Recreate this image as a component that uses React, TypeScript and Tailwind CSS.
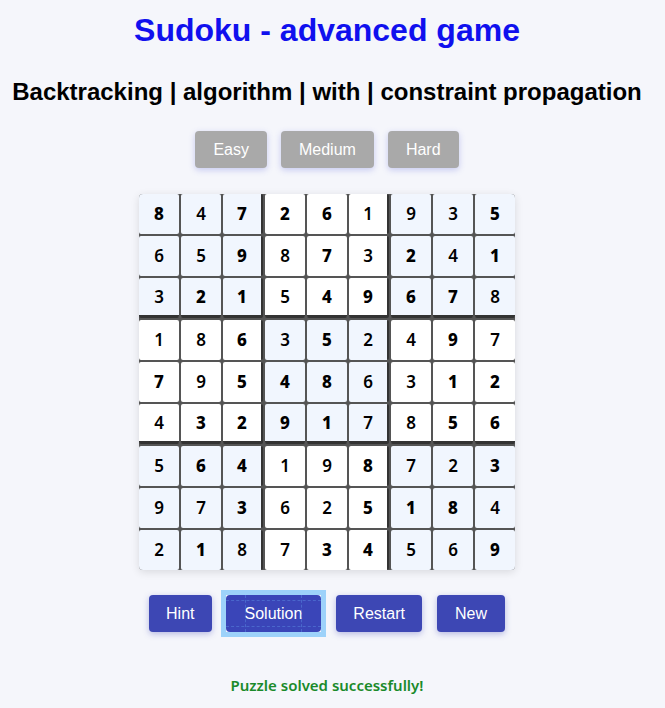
import { useState } from "react"

const solved = [
    [8, 4, 7, 2, 6, 1, 9, 3, 5],
    [6, 5, 9, 8, 7, 3, 2, 4, 1],
    [3, 2, 1, 5, 4, 9, 6, 7, 8],
    [1, 8, 6, 3, 5, 2, 4, 9, 7],
    [7, 9, 5, 4, 8, 6, 3, 1, 2],
    [4, 3, 2, 9, 1, 7, 8, 5, 6],
    [5, 6, 4, 1, 9, 8, 7, 2, 3],
    [9, 7, 3, 6, 2, 5, 1, 8, 4],
    [2, 1, 8, 7, 3, 4, 5, 6, 9],
]

// 1 = given clue (drawn heavier)
const givens = [
    [1, 0, 1, 1, 1, 0, 0, 0, 1],
    [0, 0, 1, 0, 1, 0, 1, 0, 1],
    [0, 1, 1, 0, 1, 1, 1, 1, 0],
    [0, 0, 1, 0, 1, 0, 0, 1, 0],
    [1, 0, 1, 1, 1, 0, 0, 1, 1],
    [0, 1, 1, 1, 1, 0, 0, 1, 1],
    [0, 1, 1, 0, 0, 1, 0, 0, 1],
    [0, 0, 1, 0, 0, 1, 1, 1, 0],
    [0, 1, 0, 0, 1, 1, 0, 0, 1],
]

function App() {
    const [level, setLevel] = useState("easy")
    const [message] = useState("Puzzle solved successfully!")

    const shaded = (r: number, c: number) => (Math.floor(r / 3) + Math.floor(c / 3)) % 2 === 0

    return (
        <div className="min-h-[708px] bg-[#f5f6fb] pr-[11px] flex flex-col items-center font-['Liberation_Sans',Arial,sans-serif]">
            <h1 className="mt-[12px] text-[32px] leading-[37px] font-bold text-[#1010ee]">Sudoku - advanced game</h1>
            <h2 className="mt-[29px] text-[24px] leading-[28px] font-bold text-black whitespace-nowrap">
                Backtracking | algorithm | with | constraint propagation
            </h2>

            <div className="mt-[25px] flex gap-[14px]">
                {["Easy", "Medium", "Hard"].map(l => (
                    <button
                        key={l}
                        onClick={() => setLevel(l.toLowerCase())}
                        className={`h-[37px] px-[18px] rounded-[4px] text-[16px] text-white bg-[#a9a9a9] shadow-[0_2px_6px_rgba(90,100,220,0.3)] ${level === l.toLowerCase() ? "" : ""}`}
                    >
                        {l}
                    </button>
                ))}
            </div>

            <div className="mt-[26px] grid grid-cols-[repeat(9,40px)] gap-[2px] bg-[#555] rounded-[4px] overflow-hidden shadow-[0_2px_8px_rgba(0,0,0,0.12)]">
                {solved.map((row, r) =>
                    row.map((v, c) => (
                        <div
                            key={`${r}-${c}`}
                            className={`box-border w-[40px] h-[40px] rounded-[2px] flex items-center justify-center text-[17px] text-black font-['Noto_Sans',sans-serif]
                                ${shaded(r, c) ? "bg-[#f1f6fe]" : "bg-white"}
                                ${c === 2 || c === 5 ? "border-r-[2px] border-r-[#333]" : ""}
                                ${r === 2 || r === 5 ? "border-b-[3px] border-b-[#333]" : ""}
                                ${givens[r][c] ? "font-extrabold" : "font-semibold"}`}
                        >
                            {v}
                        </div>
                    ))
                )}
            </div>

            <div className="mt-[25px] flex">
                <button className="h-[37px] px-[17px] rounded-[4px] text-[16px] text-white bg-[#3d47b4] shadow-[0_2px_6px_rgba(63,72,180,0.35)]">Hint</button>
                <div className="relative ml-[14px] outline outline-[5px] outline-[#9dd2fa]">
                    <button className="h-[37px] px-[19px] rounded-[4px] text-[16px] text-white bg-[#3a45b8]">Solution</button>
                    <div className="absolute inset-x-[19px] inset-y-0 border-x border-dashed border-[#5a8ae0]/50 pointer-events-none" />
                    <div className="absolute inset-x-0 inset-y-[5px] border-y border-dashed border-[#5a8ae0]/50 pointer-events-none" />
                </div>
                <button className="ml-[15px] h-[37px] px-[17px] rounded-[4px] text-[16px] text-white bg-[#3d47b4] shadow-[0_2px_6px_rgba(63,72,180,0.35)]">Restart</button>
                <button className="ml-[15px] h-[37px] px-[18px] rounded-[4px] text-[16px] text-white bg-[#3d47b4] shadow-[0_2px_6px_rgba(63,72,180,0.35)]">New</button>
            </div>

            <p className="mt-[43px] text-[15px] leading-[20px] font-semibold text-[#1a8a2a] font-['Noto_Sans',sans-serif]">{message}</p>
        </div>
    )
}

export default App
